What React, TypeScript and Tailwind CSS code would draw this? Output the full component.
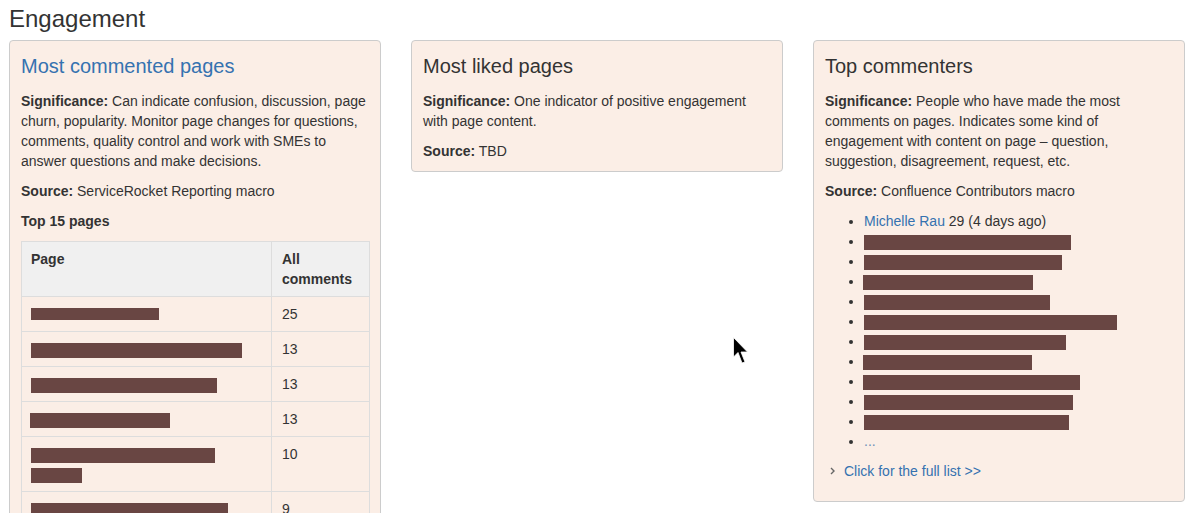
import React from "react";

const LINK = "text-[#3572b0]";

function Bar({ w, mt = 4, h = 15, ml = 0 }: { w: number; mt?: number; h?: number; ml?: number }) {
  return (
    <div className="h-[20px]" style={{ paddingTop: mt }}>
      <div className="bg-[#694643]" style={{ width: w, height: h, marginLeft: ml }} />
    </div>
  );
}

const rows: { bars: { w: number; mt?: number; h?: number; ml?: number }[]; n: string }[] = [
  { bars: [{ w: 128, h: 12 }], n: "25" },
  { bars: [{ w: 211 }], n: "13" },
  { bars: [{ w: 186 }], n: "13" },
  { bars: [{ w: 140, ml: -1 }], n: "13" },
  { bars: [{ w: 184 }, { w: 51 }], n: "10" },
  { bars: [{ w: 197 }], n: "9" },
  { bars: [{ w: 160 }], n: "9" },
];

const commenters = [
  { w: 207 },
  { w: 198 },
  { w: 170, ml: -1 },
  { w: 186 },
  { w: 253 },
  { w: 202 },
  { w: 169, ml: -1 },
  { w: 217, ml: -1 },
  { w: 209 },
  { w: 205 },
];

const CARD = "bg-[#fbeee6] border border-[#cccccc] rounded-[4px] pl-[11px] pr-[10px] pt-[10px] pb-[10px]";

export default function App() {
  return (
    <div
      className="relative bg-white text-[#333] px-[9px] text-[14px] leading-[20px]"
      style={{ fontFamily: '"Liberation Sans", Arial, sans-serif' }}
    >
      <h1 className="text-[24px] leading-[27px] pt-[5px] mb-[8px] font-normal">Engagement</h1>
      <div className="grid grid-cols-[372px_372px_372px] gap-[30px] items-start">
        {/* Card 1 */}
        <div className={CARD}>
          <h2 className={`text-[20px] leading-[24px] mt-[3px] mb-[13px] font-normal ${LINK}`}>Most commented pages</h2>
          <p className="mb-[10px]">
            <b>Significance:</b> Can indicate confusion, discussion, page churn, popularity. Monitor page changes
            for questions, comments, quality control and work with SMEs to answer questions and make decisions.
          </p>
          <p className="mb-[10px]">
            <b>Source:</b> ServiceRocket Reporting macro
          </p>
          <p className="mb-[10px] font-bold">Top 15 pages</p>
          <table className="w-full border-collapse border border-[#dddddd]">
            <thead>
              <tr className="bg-[#f0f0f0]">
                <th className="border border-[#dddddd] text-left font-bold pl-[9px] pr-[10px] pt-[7px] pb-[7px] align-top">Page</th>
                <th className="border border-[#dddddd] text-left font-bold px-[10px] pt-[7px] pb-[7px] align-top w-[98px]">
                  All comments
                </th>
              </tr>
            </thead>
            <tbody>
              {rows.map((r, i) => (
                <tr key={i}>
                  <td className="border border-[#dddddd] pl-[9px] pr-[10px] pt-[7px] pb-[7px] align-top">
                    {r.bars.map((b, j) => (
                      <Bar key={j} {...b} />
                    ))}
                  </td>
                  <td className="border border-[#dddddd] px-[10px] pt-[7px] pb-[7px] align-top">{r.n}</td>
                </tr>
              ))}
            </tbody>
          </table>
        </div>

        {/* Card 2 */}
        <div className={CARD}>
          <h2 className="text-[20px] leading-[24px] mt-[3px] mb-[13px] font-normal">Most liked pages</h2>
          <p className="mb-[10px]">
            <b>Significance:</b> One indicator of positive engagement with page content.
          </p>
          <p>
            <b>Source:</b> TBD
          </p>
        </div>

        {/* Card 3 */}
        <div className={CARD}>
          <h2 className="text-[20px] leading-[24px] mt-[3px] mb-[13px] font-normal">Top commenters</h2>
          <p className="mb-[10px]">
            <b>Significance:</b> People who have made the most comments on pages. Indicates some kind of engagement
            with content on page – question, suggestion, disagreement, request, etc.
          </p>
          <p className="mb-[10px]">
            <b>Source:</b> Confluence Contributors macro
          </p>
          <ul className="list-disc pl-[39px] mb-[10px]">
            <li>
              <span className={LINK}>Michelle Rau</span> 29 (4 days ago)
            </li>
            {commenters.map((c, i) => (
              <li key={i} className="h-[20px]">
                <div className="inline-block align-top h-[20px] pt-[4px]">
                  <div className="bg-[#694643] h-[15px]" style={{ width: c.w, marginLeft: c.ml ?? 0 }} />
                </div>
              </li>
            ))}
            <li>
              <span className="text-[#6f8fb8]">...</span>
            </li>
          </ul>
          <div className="flex items-center mb-[10px]">
            <svg width="8" height="10" viewBox="0 0 8 10" className="ml-[4px] mr-[7px]">
              <path d="M2 2 L5 5 L2 8" stroke="#666" strokeWidth="1.4" fill="none" />
            </svg>
            <span className={LINK}>Click for the full list &gt;&gt;</span>
          </div>
        </div>
      </div>

      {/* mouse cursor */}
      <svg className="absolute left-[733px] top-[337px]" width="16" height="28" viewBox="0 0 16 28">
        <path d="M0.5 0.5 L0.5 20 L5 15.5 L9 26 L12 25 L8 15 L14.5 15 Z" fill="#000" stroke="#fff" strokeWidth="0.8" />
      </svg>
    </div>
  );
}
